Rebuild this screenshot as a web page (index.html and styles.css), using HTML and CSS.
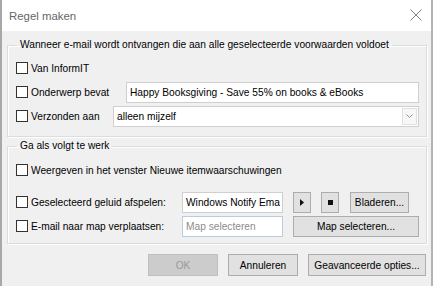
FILE: index.html
```html
<!DOCTYPE html>
<html lang="nl">
<head>
    <meta charset="UTF-8">
    <title>Regel maken</title>
    <link rel="stylesheet" href="styles.css">
</head>
<body>
    <div class="dialog">
        <div class="titlebar">
            <span class="title">Regel maken</span>
            <svg class="close" width="12" height="12" viewBox="0 0 12 12"><path d="M0.5 0.5 L11.5 11.5 M11.5 0.5 L0.5 11.5" stroke="#808080" stroke-width="1" fill="none"/></svg>
        </div>

        <div class="content">
            <fieldset class="group group-when">
                <legend>Wanneer e-mail wordt ontvangen die aan alle geselecteerde voorwaarden voldoet</legend>
                <div class="row">
                    <label class="check"><span class="box"></span>Van InformIT</label>
                </div>
                <div class="row">
                    <label class="check w-subject"><span class="box"></span>Onderwerp bevat</label>
                    <div class="field wide">Happy Booksgiving - Save 55% on books &amp; eBooks</div>
                </div>
                <div class="row">
                    <label class="check w-sent"><span class="box"></span>Verzonden aan</label>
                    <div class="field select">
                        <span>alleen mijzelf</span>
                        <span class="drop"><svg width="7" height="4" viewBox="0 0 7 4"><path d="M0.5 0.5 L3.5 3.5 L6.5 0.5" stroke="#909090" fill="none"/></svg></span>
                    </div>
                </div>
            </fieldset>

            <fieldset class="group group-do">
                <legend>Ga als volgt te werk</legend>
                <div class="row">
                    <label class="check"><span class="box"></span>Weergeven in het venster Nieuwe itemwaarschuwingen</label>
                </div>
                <div class="row row-sound">
                    <label class="check w-action"><span class="box"></span>Geselecteerd geluid afspelen:</label>
                    <div class="field short">Windows Notify Ema</div>
                    <button class="btn icon"><svg width="4" height="7" viewBox="0 0 4 7"><path d="M0 0 L4 3.5 L0 7 Z" fill="#111"/></svg></button>
                    <button class="btn icon"><svg width="5" height="5" viewBox="0 0 5 5"><rect width="5" height="5" fill="#111"/></svg></button>
                    <button class="btn browse">Bladeren...</button>
                </div>
                <div class="row">
                    <label class="check w-action"><span class="box"></span>E-mail naar map verplaatsen:</label>
                    <div class="field short placeholder">Map selecteren</div>
                    <button class="btn folder">Map selecteren...</button>
                </div>
            </fieldset>

            <div class="actions">
                <button class="btn ok" disabled>OK</button>
                <button class="btn cancel">Annuleren</button>
                <button class="btn advanced">Geavanceerde opties...</button>
            </div>
        </div>
    </div>
</body>
</html>
```

FILE: styles.css
```css
body { margin: 0; background: #f0f0f0; font-family: "Liberation Sans", Arial, sans-serif; font-size: 10.2px; color: #000; }
.dialog { width: 433px; height: 286px; overflow: hidden; box-sizing: border-box; border-left: 2px solid #a8a8a8; border-right: 2px solid #b4b4b4; background: #f0f0f0; }
.titlebar { height: 31px; box-sizing: border-box; background: #fff; display: flex; align-items: center; justify-content: space-between; padding: 0 9px 0 7px; }
.title { font-size: 11.4px; color: #666; }
.close { margin-top: -1px; }
.content { padding: 7px 5px 0 5px; }
.group { margin: 0; padding: 4px 7px 8px 8px; border: 1px solid #dcdcdc; box-shadow: inset 1px 1px 0 #fff, 1px 1px 0 #fff; }
.group legend { padding: 0 3px; margin-left: 1px; line-height: 14px; white-space: nowrap; }
.group-do { margin-top: 2px; padding-top: 5px; padding-bottom: 5px; }
.row { display: flex; align-items: center; height: 24px; }
.row-sound { margin-top: 8px; }
.check { display: flex; align-items: center; white-space: nowrap; flex-shrink: 0; }
.box { width: 10px; height: 10px; flex-shrink: 0; border: 1px solid #333; background: #fff; margin-right: 3px; }
.w-subject { width: 110px; }
.w-sent { width: 97px; }
.w-action { width: 166px; }
.field { height: 21px; flex-shrink: 0; box-sizing: border-box; border: 1px solid #cfcfcf; background: #fff; padding: 0 3px; display: flex; align-items: center; white-space: nowrap; overflow: hidden; }
.wide { width: 293px; }
.select { width: 306px; justify-content: space-between; padding-right: 1px; }
.drop { width: 15px; height: 17px; box-sizing: border-box; display: flex; align-items: center; justify-content: center; border: 1px solid #e0e0e0; background: #f7f7f7; }
.short { width: 101px; }
.placeholder { color: #8c8c8c; border-color: #b9cde0; }
.btn { font: inherit; color: #000; height: 21px; flex-shrink: 0; box-sizing: border-box; border: 1px solid #adadad; background: #e1e1e1; padding: 0; display: flex; align-items: center; justify-content: center; white-space: nowrap; }
.icon { width: 18px; margin-left: 10px; }
.browse { width: 59px; margin-left: 11px; }
.folder { width: 126px; margin-left: 10px; }
.actions { display: flex; justify-content: flex-end; margin-top: 10px; }
.actions .btn { height: 22px; margin-left: 10px; }
.ok { width: 70px; background: #cccccc; border-color: #bfbfbf; color: #9a9a9a; }
.cancel { width: 70px; }
.advanced { width: 118px; }
```
